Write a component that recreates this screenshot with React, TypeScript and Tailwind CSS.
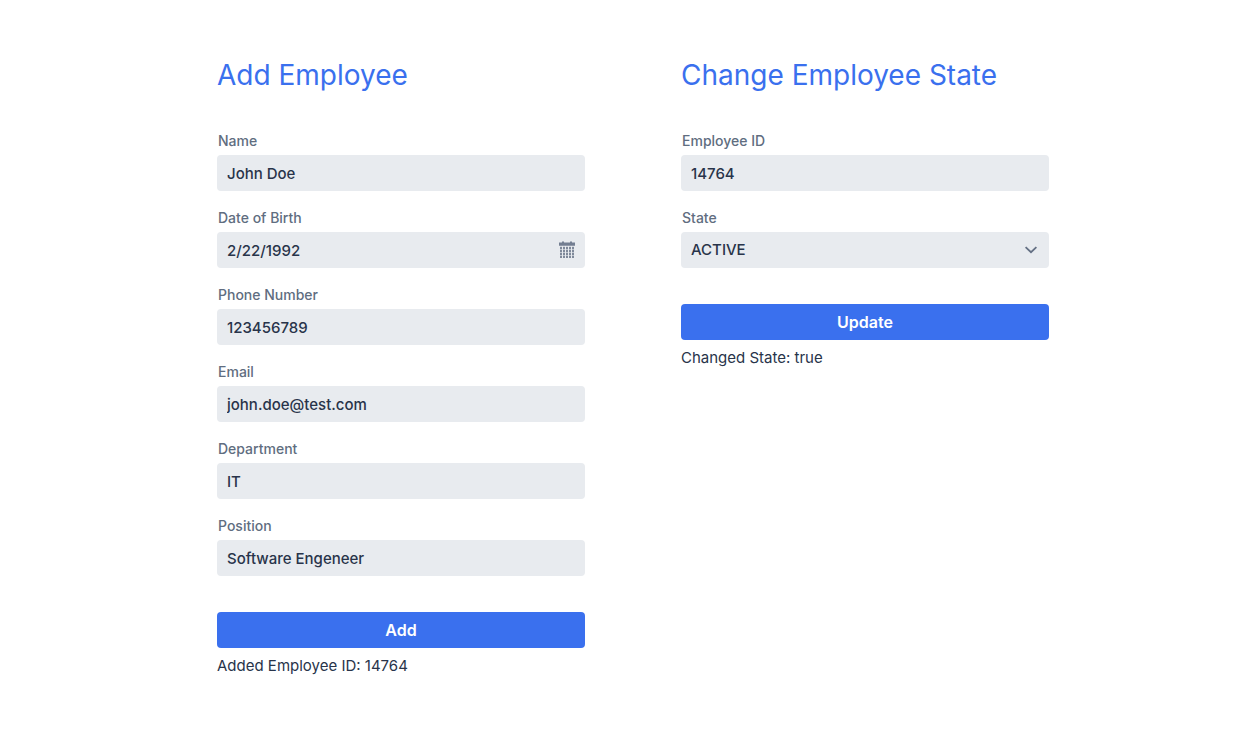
import { useId, useState } from "react";
import type { ReactNode } from "react";

const labelClass = "block pl-px text-sm leading-5 font-medium text-[#606d80]";
const controlClass =
  "block h-9 w-full appearance-none rounded bg-[#e8ebef] px-2.5 text-[15px] font-medium text-[#28344a] outline-none focus:ring-2 focus:ring-[#3a70ee]/50";

function CalendarIcon() {
  const columns = [1, 4, 7, 10, 13];
  const rows = [6, 9, 12, 15];
  return (
    <svg width="16" height="18" viewBox="0 0 16 18" fill="currentColor" aria-hidden="true">
      <path d="M3 .4h2v1.2h6V.4h2v1.2h3v3.2H0V1.6h3z" />
      {columns.map((x) => (
        <rect key={x} x={x} y="5.5" width="2" height="11.5" opacity="0.35" />
      ))}
      {rows.map((y) =>
        columns.map((x) => (
          <rect key={`${x}-${y}`} x={x} y={y} width="2" height="2" opacity="0.85" />
        )),
      )}
    </svg>
  );
}

function ChevronIcon() {
  return (
    <svg width="14" height="10" viewBox="0 0 14 10" fill="none" aria-hidden="true">
      <path d="M1.6 2.2 7 7.2l5.4-5" stroke="currentColor" strokeWidth="1.8" />
    </svg>
  );
}

function TextField({ label, initial, icon }: { label: string; initial: string; icon?: ReactNode }) {
  const id = useId();
  const [value, setValue] = useState(initial);
  return (
    <div>
      <label htmlFor={id} className={labelClass}>
        {label}
      </label>
      <div className="relative mt-1">
        <input id={id} value={value} onChange={(e) => setValue(e.target.value)} className={controlClass} />
        {icon && (
          <button
            type="button"
            aria-label="Open calendar"
            className="absolute inset-y-0 right-2.5 flex items-center text-[#737e91]"
          >
            {icon}
          </button>
        )}
      </div>
    </div>
  );
}

function StateField() {
  const id = useId();
  return (
    <div>
      <label htmlFor={id} className={labelClass}>
        State
      </label>
      <div className="relative mt-1">
        <select id={id} defaultValue="ACTIVE" className={controlClass}>
          <option>ACTIVE</option>
        </select>
        <span className="pointer-events-none absolute inset-y-0 right-[11px] flex items-center text-[#647084]">
          <ChevronIcon />
        </span>
      </div>
    </div>
  );
}

interface PanelProps {
  title: string;
  action: string;
  result: string;
  children: ReactNode;
}

function Panel({ title, action, result, children }: PanelProps) {
  return (
    <section>
      <h2 className="text-[28px] leading-9 text-[#3a70ee]">{title}</h2>
      <form className="mt-[38px]" onSubmit={(e) => e.preventDefault()}>
        <div className="flex flex-col gap-[17px]">{children}</div>
        <button
          type="submit"
          className="mt-9 h-9 w-full rounded bg-[#3a70ee] text-base font-semibold text-white"
        >
          {action}
        </button>
      </form>
      <p className="mt-1 text-[15px] leading-7 text-[#28344a]">{result}</p>
    </section>
  );
}

export default function App() {
  return (
    <main className="min-h-screen bg-white py-[57px] pr-4 pl-[30px] font-['Inter',sans-serif]">
      <div className="mx-auto grid max-w-[832px] grid-cols-1 items-start gap-x-24 gap-y-12 sm:grid-cols-2">
        <Panel title="Add Employee" action="Add" result="Added Employee ID: 14764">
          <TextField label="Name" initial="John Doe" />
          <TextField label="Date of Birth" initial="2/22/1992" icon={<CalendarIcon />} />
          <TextField label="Phone Number" initial="123456789" />
          <TextField label="Email" initial="john.doe@test.com" />
          <TextField label="Department" initial="IT" />
          <TextField label="Position" initial="Software Engeneer" />
        </Panel>
        <Panel title="Change Employee State" action="Update" result="Changed State: true">
          <TextField label="Employee ID" initial="14764" />
          <StateField />
        </Panel>
      </div>
    </main>
  );
}
